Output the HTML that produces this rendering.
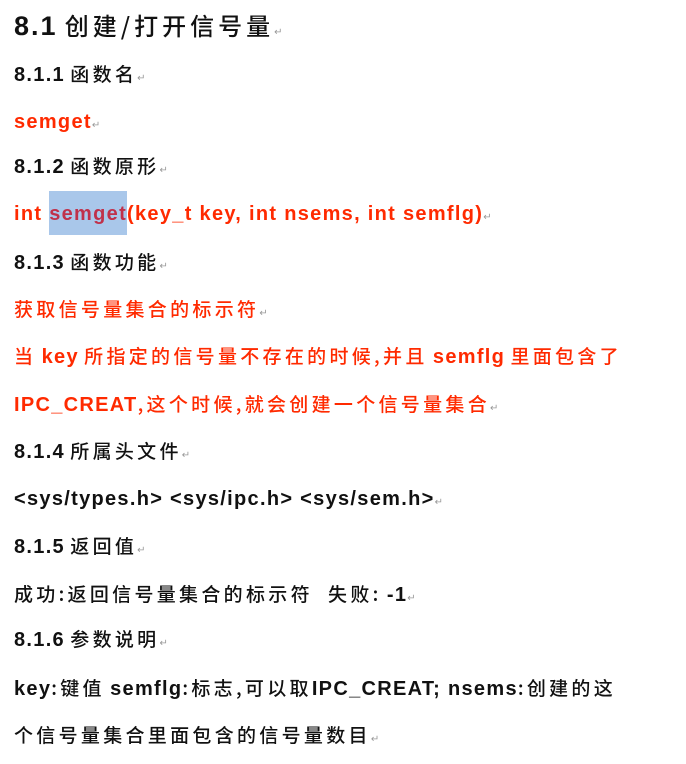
<!DOCTYPE html>
<html><head><meta charset="utf-8"><style>
body{margin:0;width:686px;height:764px;background:#fff;overflow:hidden;position:relative;font-family:"Liberation Sans","Noto Sans CJK SC",sans-serif;}
.l{position:absolute;left:14px;white-space:nowrap;font-size:19px;line-height:24px;color:#111;}
.c{font-family:"Noto Sans CJK SC",sans-serif;font-size:19px;letter-spacing:3.3px;font-weight:500}
b{font-weight:bold;font-family:"Liberation Sans",sans-serif;font-size:20px;letter-spacing:1.3px}
.r{color:#ff2a00}
.m{color:#999;font-size:10px;font-family:"Liberation Sans",sans-serif;letter-spacing:0}
.hl{background:#a9c7ea;color:#c0304a;padding:12px 0 10px}
</style></head><body>
<div class="l" style="top:10px;font-size:26px;line-height:30px"><b style="font-size:27px;letter-spacing:2px">8.1</b> <span class="c" style="font-size:24px;letter-spacing:4px">创建/打开信号量</span><span class="m">↵</span></div>
<div class="l" style="top:62px"><b>8.1.1</b> <span class="c">函数名</span><span class="m">↵</span></div>
<div class="l r" style="top:110px"><b>semget</b><span class="m">↵</span></div>
<div class="l" style="top:154px"><b>8.1.2</b> <span class="c">函数原形</span><span class="m">↵</span></div>
<div class="l r" style="top:202px"><b>int <span class="hl">semget</span>(key_t key, int nsems, int semflg)</b><span class="m">↵</span></div>
<div class="l" style="top:250px"><b>8.1.3</b> <span class="c">函数功能</span><span class="m">↵</span></div>
<div class="l r" style="top:297px"><span class="c">获取信号量集合的标示符</span><span class="m">↵</span></div>
<div class="l r" style="top:344px"><span class="c">当</span> <b>key</b> <span class="c">所指定的信号量不存在的时候,并且</span> <b>semflg</b> <span class="c">里面包含了</span></div>
<div class="l r" style="top:392px"><b>IPC_CREAT</b><span class="c">,这个时候,就会创建一个信号量集合</span><span class="m">↵</span></div>
<div class="l" style="top:439px"><b>8.1.4</b> <span class="c">所属头文件</span><span class="m">↵</span></div>
<div class="l" style="top:487px"><b>&lt;sys/types.h&gt; &lt;sys/ipc.h&gt; &lt;sys/sem.h&gt;</b><span class="m">↵</span></div>
<div class="l" style="top:534px"><b>8.1.5</b> <span class="c">返回值</span><span class="m">↵</span></div>
<div class="l" style="top:582px"><span class="c">成功:返回信号量集合的标示符 &nbsp;失败:</span> <b>-1</b><span class="m">↵</span></div>
<div class="l" style="top:627px"><b>8.1.6</b> <span class="c">参数说明</span><span class="m">↵</span></div>
<div class="l" style="top:676px"><b>key</b><span class="c">:键值</span> <b>semflg</b><span class="c">:标志,可以取</span><b>IPC_CREAT; nsems</b><span class="c">:创建的这</span></div>
<div class="l" style="top:723px"><span class="c">个信号量集合里面包含的信号量数目</span><span class="m">↵</span></div>
</body></html>
